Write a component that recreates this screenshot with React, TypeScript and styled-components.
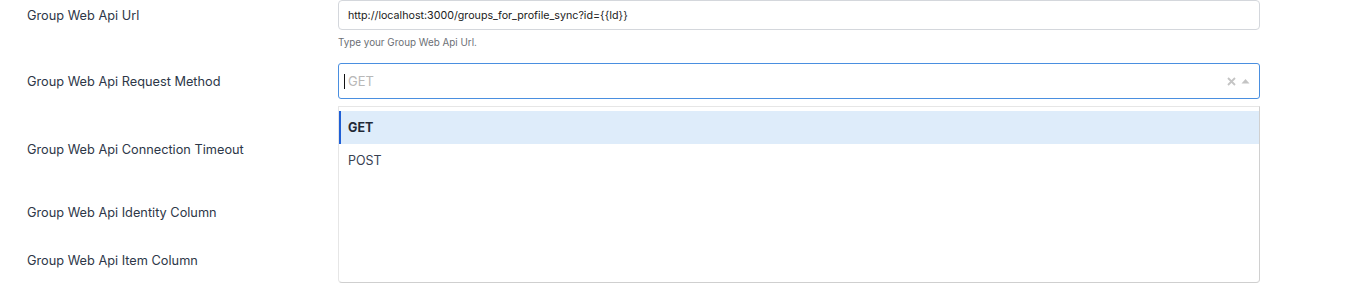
import React from 'react';
import styled, { createGlobalStyle } from 'styled-components';

const GlobalStyle = createGlobalStyle`
  html, body { margin: 0; padding: 0; background: #fff; }
  body { font-family: Inter, "Noto Sans", sans-serif; }
`;

const Form = styled.div`
  width: 1349px;
  display: flex;
  flex-direction: column;
`;

const Row = styled.div<{ $space: number }>`
  display: grid;
  grid-template-columns: 338px 922px;
  margin-bottom: ${p => p.$space}px;
`;

const Label = styled.div<{ $h: number }>`
  height: ${p => p.$h}px;
  display: flex;
  align-items: center;
  padding-left: 27px;
  font-size: 12.75px;
  color: #2d3748;
`;

const Field = styled.div`
  display: flex;
  flex-direction: column;
  position: relative;
`;

const TextInput = styled.div<{ $h: number }>`
  height: ${p => p.$h}px;
  box-sizing: border-box;
  border: 1px solid #d4d7dc;
  border-radius: 4px;
  padding: 0 9px;
  display: flex;
  align-items: center;
  font-size: 10.7px;
  color: #222;
`;

const Hint = styled.div`
  margin-top: 6px;
  font-size: 9.85px;
  line-height: 12px;
  color: #6b6f75;
`;

const SelectBox = styled.div`
  height: 36px;
  box-sizing: border-box;
  border: 1px solid #4a8fe0;
  border-radius: 3px;
  padding: 0 9px 0 5px;
  display: flex;
  align-items: center;
`;

const Caret = styled.span`
  width: 1px;
  height: 15px;
  background: #111;
  margin-right: 3px;
`;

const Placeholder = styled.span`
  flex: 1;
  font-size: 13px;
  color: #b8b8b8;
`;

const Indicators = styled.div`
  display: flex;
  align-items: center;
  gap: 5px;
`;

const Menu = styled.div`
  position: absolute;
  top: 43px;
  left: 0;
  right: 0;
  height: 177px;
  box-sizing: border-box;
  background: #fff;
  border: 1px solid #e6e6e6;
  border-right-color: #d0d0d0;
  border-bottom-color: #cfcfcf;
  border-radius: 0 0 4px 4px;
  padding-top: 4px;
  z-index: 5;
`;

const Option = styled.div<{ $active?: boolean }>`
  height: 33px;
  display: flex;
  align-items: center;
  padding-left: ${p => (p.$active ? 7 : 9)}px;
  border-left: ${p => (p.$active ? '2px solid #1f5fd6' : 'none')};
  background: ${p => (p.$active ? '#deecfa' : 'transparent')};
  font-size: 12.5px;
  font-weight: ${p => (p.$active ? 700 : 400)};
  color: ${p => (p.$active ? '#1f2937' : '#374151')};
`;

const App = () => {
  return (
    <>
      <GlobalStyle />
      <Form>
        <Row $space={15}>
          <Label $h={30}>Group Web Api Url</Label>
          <Field>
            <TextInput $h={30}>http://localhost:3000/groups_for_profile_sync?id={'{{Id}}'}</TextInput>
            <Hint>Type your Group Web Api Url.</Hint>
          </Field>
        </Row>
        <Row $space={33}>
          <Label $h={36}>Group Web Api Request Method</Label>
          <Field>
            <SelectBox>
              <Caret />
              <Placeholder>GET</Placeholder>
              <Indicators>
                <svg width="9" height="9" viewBox="0 0 9 9">
                  <path d="M1 1 L8 8 M8 1 L1 8" stroke="#c4c4c4" strokeWidth="1.8" />
                </svg>
                <svg width="9" height="6" viewBox="0 0 9 6">
                  <path d="M0.5 5.5 L4.5 1 L8.5 5.5 Z" fill="#c4c4c4" />
                </svg>
              </Indicators>
            </SelectBox>
            <Menu>
              <Option $active>GET</Option>
              <Option>POST</Option>
            </Menu>
          </Field>
        </Row>
        <Row $space={29}>
          <Label $h={34}>Group Web Api Connection Timeout</Label>
          <Field>
            <TextInput $h={34} />
          </Field>
        </Row>
        <Row $space={14}>
          <Label $h={34}>Group Web Api Identity Column</Label>
          <Field>
            <TextInput $h={34} />
          </Field>
        </Row>
        <Row $space={14}>
          <Label $h={34}>Group Web Api Item Column</Label>
          <Field>
            <TextInput $h={34} />
          </Field>
        </Row>
      </Form>
    </>
  );
};

export default App;
